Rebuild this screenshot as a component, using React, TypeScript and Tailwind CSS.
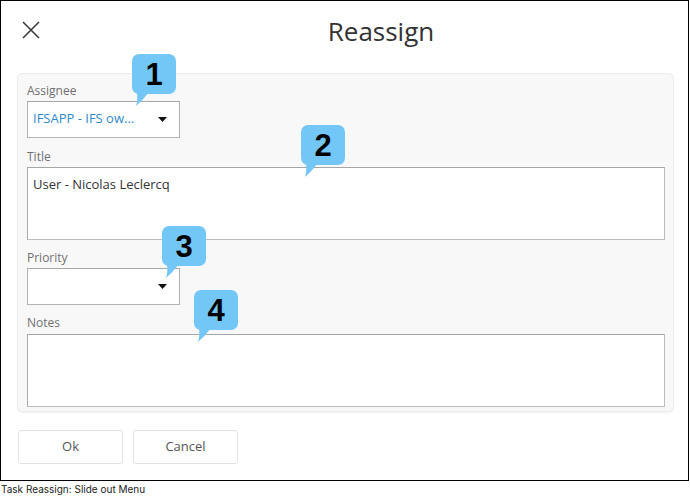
import React from "react";

const font = { fontFamily: '"Open Sans", "Liberation Sans", sans-serif' };

function Callout({ n, className }: { n: string; className: string }) {
  return (
    <div className={"absolute w-[46px] h-[54px] " + className}>
      <svg width="46" height="54" viewBox="0 0 46 54" className="absolute left-0 top-0">
        <rect x="0" y="0" width="44" height="40" rx="7" fill="#73c7f7" />
        <path d="M5 38 Q6 46 4 52 Q11 46 17 38 Z" fill="#73c7f7" />
      </svg>
      <div className="absolute left-0 top-0 w-[44px] h-[40px] flex items-center justify-center text-[31px] font-bold text-black leading-none font-['Liberation_Sans',Arial,sans-serif]">
        {n}
      </div>
    </div>
  );
}

function Caret() {
  return (
    <svg width="9" height="5" viewBox="0 0 9 5" className="shrink-0">
      <path d="M0 0 H9 L4.5 5 Z" fill="#111" />
    </svg>
  );
}

function Label({ children, gap = "mb-[3px]" }: { children: React.ReactNode; gap?: string }) {
  return <div className={"text-[12px] leading-[15px] text-[#707070] " + gap}>{children}</div>;
}

export default function App() {
  return (
    <div className="bg-white w-[690px] h-[501px]" style={font}>
      <div className="relative w-[689px] h-[481px] border border-black bg-white">
        {/* header */}
        <div className="flex h-[60px] items-center">
          <div className="w-[73px] pl-[21px] -mt-[2px]">
            <svg width="18" height="18" viewBox="0 0 18 18">
              <path d="M1 1 L17 17 M17 1 L1 17" stroke="#3a3a3a" strokeWidth="1.6" fill="none" />
            </svg>
          </div>
          <div className="flex-1 text-center text-[26px] leading-[36px] text-[#333]">Reassign</div>
        </div>

        {/* form panel */}
        <div className="mt-[12px] ml-[16px] w-[657px] rounded-[5px] border border-[#ededed] bg-[#f8f8f8] pt-[9px] pl-[9px] pr-[8px] pb-[4px] shadow-[0_1px_2px_rgba(0,0,0,0.06)]">
          <Label>Assignee</Label>
          <div className="w-[153px] h-[37px] bg-white border border-[#b3b3b3] border-t-[#a8a8a8] flex items-center pl-[5px] pr-[12px] pb-[2px]">
            <span className="flex-1 text-[13px] leading-[17px] text-[#2f8ac7]">IFSAPP - IFS ow...</span>
            <span className="mt-[2px] flex">
              <Caret />
            </span>
          </div>

          <div className="mt-[11px]">
            <Label>Title</Label>
            <div className="w-[638px] h-[73px] bg-white border border-[#bdbdbd] border-t-[#a6a6a6] border-l-[#a9a9a9] pl-[5px] pt-[8px] text-[13px] leading-[17px] text-[#333]">
              User - Nicolas Leclercq
            </div>
          </div>

          <div className="mt-[10px]">
            <Label>Priority</Label>
            <div className="w-[153px] h-[37px] bg-white border border-[#b3b3b3] border-t-[#a8a8a8] flex items-center justify-end pr-[12px]">
              <Caret />
            </div>
          </div>

          <div className="mt-[10px]">
            <Label gap="mb-[4px]">Notes</Label>
            <div className="w-[638px] h-[73px] bg-white border border-[#bdbdbd] border-t-[#a6a6a6] border-l-[#a9a9a9]" />
          </div>
        </div>

        {/* actions */}
        <div className="mt-[18px] ml-[17px] flex gap-[10px]">
          <button className="w-[105px] h-[34px] rounded-[3px] border border-[#e2e2e2] bg-white text-[13px] text-[#555]">
            Ok
          </button>
          <button className="w-[105px] h-[34px] rounded-[3px] border border-[#e2e2e2] bg-white text-[13px] text-[#555]">
            Cancel
          </button>
        </div>

        <Callout n="1" className="left-[131px] top-[53px]" />
        <Callout n="2" className="left-[300px] top-[124px]" />
        <Callout n="3" className="left-[161px] top-[225px]" />
        <Callout n="4" className="left-[193px] top-[289px]" />
      </div>
      <div className="pl-[1px] mt-[1px] text-[10px] leading-[14px] text-[#222] font-['Inter',sans-serif]">
        Task Reassign: Slide out Menu
      </div>
    </div>
  );
}
